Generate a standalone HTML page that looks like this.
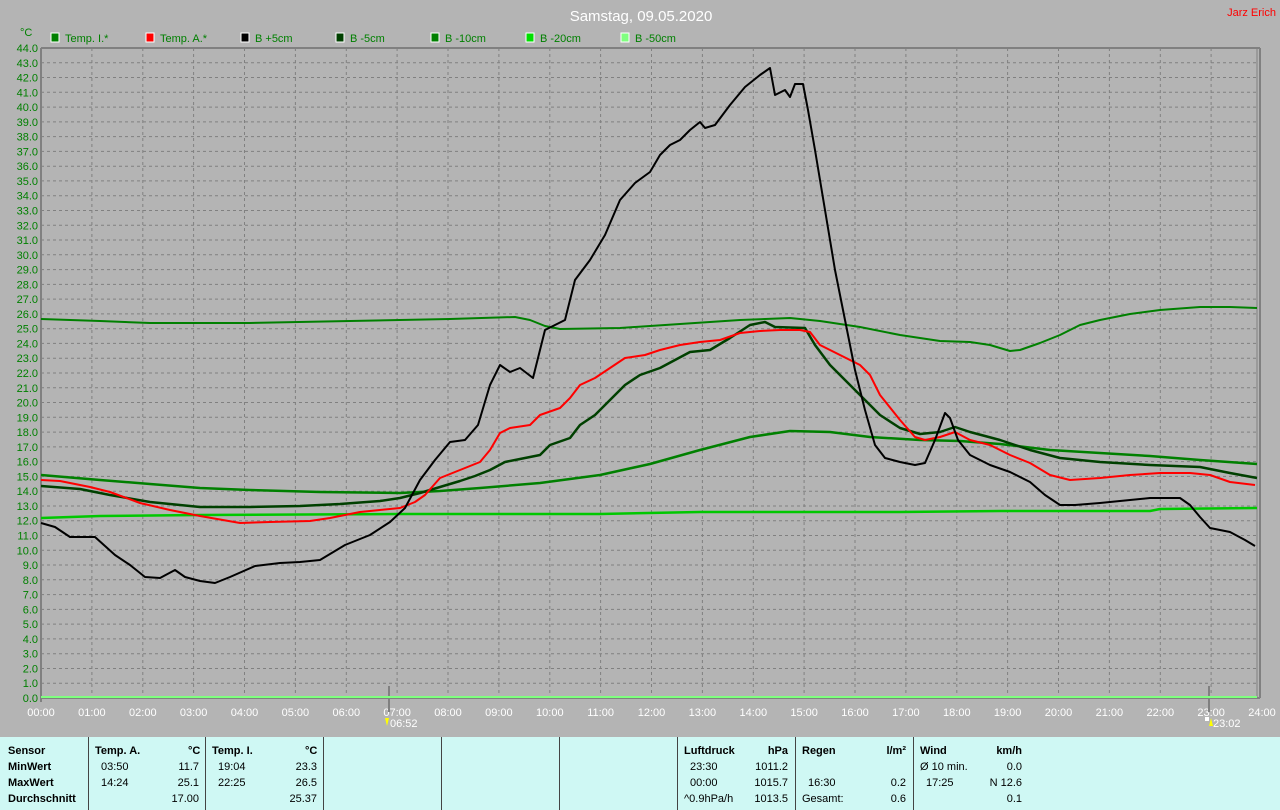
<!DOCTYPE html>
<html><head><meta charset="utf-8"><style>
html,body{margin:0;padding:0;width:1280px;height:810px;overflow:hidden;background:#b4b4b4;font-family:"Liberation Sans",sans-serif}
svg{position:absolute;left:0;top:0}
#tbl{position:absolute;left:0;top:737px;width:1280px;height:73px;background:#cff8f4;font-size:11px;color:#000}
.c{position:absolute;white-space:nowrap}
.b{font-weight:bold}
.v{position:absolute;top:0;width:1px;height:73px;background:#444}
</style></head><body>
<svg width="1280" height="737" id="s" xmlns="http://www.w3.org/2000/svg"></svg>
<div id="tbl">
<div class="v" style="left:88px"></div><div class="v" style="left:205px"></div><div class="v" style="left:323px"></div><div class="v" style="left:441px"></div><div class="v" style="left:559px"></div><div class="v" style="left:677px"></div><div class="v" style="left:795px"></div><div class="v" style="left:913px"></div>
<div class="c b" style="left:8px;top:8px">Sensor</div>
<div class="c b" style="left:8px;top:24px">MinWert</div>
<div class="c b" style="left:8px;top:40px">MaxWert</div>
<div class="c b" style="left:8px;top:56px">Durchschnitt</div>
<div class="c b" style="left:95px;top:8px">Temp. A.</div>
<div class="c b" style="left:188px;top:8px">°C</div>
<div class="c" style="left:101px;top:24px">03:50</div><div class="c" style="right:1081px;top:24px">11.7</div>
<div class="c" style="left:101px;top:40px">14:24</div><div class="c" style="right:1081px;top:40px">25.1</div>
<div class="c" style="right:1081px;top:56px">17.00</div>
<div class="c b" style="left:212px;top:8px">Temp. I.</div>
<div class="c b" style="left:305px;top:8px">°C</div>
<div class="c" style="left:218px;top:24px">19:04</div><div class="c" style="right:963px;top:24px">23.3</div>
<div class="c" style="left:218px;top:40px">22:25</div><div class="c" style="right:963px;top:40px">26.5</div>
<div class="c" style="right:963px;top:56px">25.37</div>
<div class="c b" style="left:684px;top:8px">Luftdruck</div><div class="c b" style="right:492px;top:8px">hPa</div>
<div class="c" style="left:690px;top:24px">23:30</div><div class="c" style="right:492px;top:24px">1011.2</div>
<div class="c" style="left:690px;top:40px">00:00</div><div class="c" style="right:492px;top:40px">1015.7</div>
<div class="c" style="left:684px;top:56px">^0.9hPa/h</div><div class="c" style="right:492px;top:56px">1013.5</div>
<div class="c b" style="left:802px;top:8px">Regen</div><div class="c b" style="right:374px;top:8px">l/m²</div>
<div class="c" style="left:808px;top:40px">16:30</div><div class="c" style="right:374px;top:40px">0.2</div>
<div class="c" style="left:802px;top:56px">Gesamt:</div><div class="c" style="right:374px;top:56px">0.6</div>
<div class="c b" style="left:920px;top:8px">Wind</div><div class="c b" style="right:258px;top:8px">km/h</div>
<div class="c" style="left:920px;top:24px">Ø 10 min.</div><div class="c" style="right:258px;top:24px">0.0</div>
<div class="c" style="left:926px;top:40px">17:25</div><div class="c" style="right:258px;top:40px">N 12.6</div>
<div class="c" style="right:258px;top:56px">0.1</div>
</div>
<script>
var s=document.getElementById('s'),h='';
var L=41,R=1257,T=48,B=698;
function X(t){return L+t*50.875}function Y(v){return B-v*14.773}
for(var i=1;i<44;i++){var y=Y(i).toFixed(1);h+='<line x1="'+L+'" x2="'+R+'" y1="'+y+'" y2="'+y+'" stroke="#808080" stroke-dasharray="3,3"/>';}
for(var i=1;i<24;i++){var x=X(i).toFixed(1);h+='<line y1="'+T+'" y2="'+B+'" x1="'+x+'" x2="'+x+'" stroke="#808080" stroke-dasharray="3,3"/>';}
for(var i=0;i<=44;i++){h+='<text x="38" y="'+(Y(i)+4).toFixed(1)+'" font-size="11" fill="#008000" text-anchor="end">'+i.toFixed(1)+'</text>';}
for(var i=0;i<=24;i++){h+='<text x="'+X(i).toFixed(1)+'" y="716" font-size="11" fill="#fff" text-anchor="middle">'+(i<10?'0':'')+i+':00</text>';}
h+='<line x1="'+L+'" x2="'+L+'" y1="'+T+'" y2="'+(B+4)+'" stroke="#808080" stroke-width="2"/>';
h+='<line x1="'+L+'" x2="'+(R+3)+'" y1="'+T+'" y2="'+T+'" stroke="#808080" stroke-width="2"/>';
h+='<line x1="'+L+'" x2="'+(R+3)+'" y1="'+B+'" y2="'+B+'" stroke="#808080" stroke-width="2"/>';
h+='<line x1="'+R+'" x2="'+R+'" y1="'+T+'" y2="'+B+'" stroke="#808080" stroke-width="1"/><line x1="1260" x2="1260" y1="'+T+'" y2="'+B+'" stroke="#808080" stroke-width="2"/>';
h+='<line x1="389" x2="389" y1="686" y2="712" stroke="#808080" stroke-width="2"/><line x1="1209" x2="1209" y1="686" y2="712" stroke="#808080" stroke-width="2"/>';
h+='<text x="390" y="727" font-size="11" fill="#fff">06:52</text><polygon points="385,718 389,718 387,726" fill="#ff0"/>';
h+='<text x="1213" y="727" font-size="11" fill="#fff">23:02</text><polygon points="1209,726 1213,726 1211,718" fill="#ff0"/><rect x="1205" y="717" width="4" height="4" fill="#fff"/>';
h+='<text x="641" y="21" font-size="15" fill="#fff" text-anchor="middle">Samstag, 09.05.2020</text>';
h+='<text x="1276" y="16" font-size="11" fill="#f00" text-anchor="end">Jarz Erich</text>';
h+='<text x="20" y="36" font-size="11" fill="#008000">°C</text>';
var lg=[[51,'#008000','Temp. I.*'],[146,'#ff0000','Temp. A.*'],[241,'#000','B +5cm'],[336,'#004000','B -5cm'],[431,'#008000','B -10cm'],[526,'#00e000','B -20cm'],[621,'#80ff80','B -50cm']];
lg.forEach(function(g){h+='<rect x="'+g[0]+'" y="33" width="8" height="9" fill="'+g[1]+'" stroke="#fff"/><text x="'+(g[0]+14)+'" y="42" font-size="11" fill="#008000">'+g[2]+'</text>';});
function P(c,w,p){h+='<polyline fill="none" stroke="'+c+'" stroke-width="'+w+'" stroke-linejoin="round" points="'+p+'"/>';}
P('#80ff80',2,'41,697 1257,697');
P('#00c800',2.5,'41,518 100,516 200,515 400,514 600,514 700,512 900,512 1000,511 1150,511 1160,509 1257,508');
P('#008000',2,'41,319 100,321 150,323 250,323 350,321 450,319 515,317 530,320 545,326 560,329 620,328 680,324 740,320 790,318 820,321 860,327 900,335 940,341 970,342 990,345 1010,351 1020,350 1040,343 1060,335 1080,325 1100,320 1130,314 1160,310 1200,307 1230,307 1257,308');
P('#008000',2.5,'41,475 100,480 150,484 200,488 250,490 320,492 400,493 440,491 480,488 540,483 600,475 650,464 700,450 750,437 790,431 830,432 870,437 920,440 960,441 1000,444 1050,450 1100,453 1150,456 1200,460 1257,464');
P('#004000',2.5,'41,486 80,489 110,495 150,502 200,507 250,507 300,506 340,504 380,501 400,498 420,493 440,487 460,481 475,476 490,470 505,462 520,459 540,455 550,445 570,438 580,425 595,415 610,400 625,385 640,375 660,368 675,360 690,352 710,350 730,338 750,325 765,322 775,327 805,328 815,345 830,365 850,385 865,400 880,415 900,428 920,434 940,432 955,427 970,432 1000,440 1030,450 1060,458 1100,462 1150,465 1200,467 1230,473 1257,478');
P('#ff0000',2,'41,480 60,481 90,487 110,492 140,503 170,510 200,516 240,523 270,522 310,521 330,518 345,515 360,512 380,510 400,508 415,502 425,495 440,478 460,470 480,462 490,450 500,433 510,428 530,425 540,415 560,408 570,398 580,385 595,378 610,368 625,358 645,355 660,350 680,345 700,342 720,340 740,333 760,331 780,330 800,330 810,332 820,345 840,355 860,365 870,375 880,395 900,420 915,437 925,440 940,437 955,432 970,440 990,445 1010,455 1030,463 1050,475 1070,480 1100,478 1130,475 1160,473 1190,473 1210,475 1230,482 1255,485');
P('#000',2,'41,523 55,527 70,537 95,537 115,555 130,565 145,577 160,578 175,570 185,577 200,581 215,583 230,577 255,566 280,563 300,562 320,560 345,545 370,535 390,522 405,508 420,480 435,460 450,442 465,440 478,425 490,385 500,365 510,372 520,368 533,378 545,330 555,325 565,320 575,280 590,260 605,235 620,200 635,183 650,172 660,155 670,145 680,140 690,130 700,122 705,128 715,125 730,105 745,87 760,75 770,68 775,95 785,90 790,97 795,84 803,84 808,110 815,150 825,210 835,270 845,320 855,370 865,410 875,445 885,458 900,462 915,465 925,463 935,440 945,413 950,418 958,440 970,455 990,465 1010,472 1030,482 1045,495 1060,505 1075,505 1100,503 1130,500 1150,498 1180,498 1190,505 1200,517 1210,528 1230,532 1245,540 1255,546');
s.innerHTML=h;
</script>
</body></html>
